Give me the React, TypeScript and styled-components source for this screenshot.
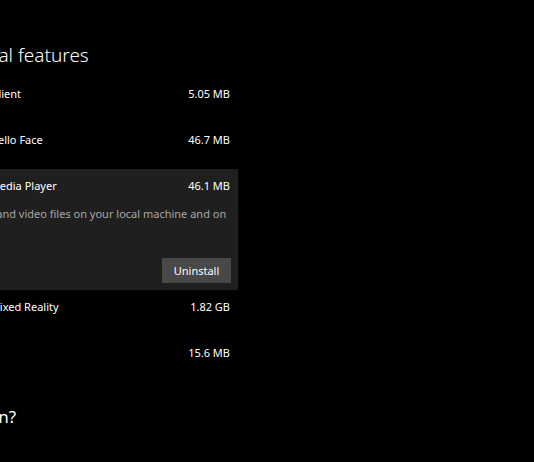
import React from 'react';
import styled, {createGlobalStyle} from "styled-components";

const GlobalStyle = createGlobalStyle`
  html, body {
    margin: 0;
    padding: 0;
    background: #000;
  }
  body {
    font-family: "Noto Sans", "Open Sans", sans-serif;
    color: #fff;
  }
`

type Feature = {
    name: string;
    size: string;
    description?: string;
};

const features: Feature[] = [
    {name: "OpenSSH Client", size: "5.05 MB"},
    {name: "Windows Hello Face", size: "46.7 MB"},
    {
        name: "Windows Media Player",
        size: "46.1 MB",
        description: "Play audio and video files on your local machine and on the Internet.",
    },
    {name: "Windows Mixed Reality", size: "1.82 GB"},
    {name: "WordPad", size: "15.6 MB"},
];

export default function App() {
    return (
        <>
            <GlobalStyle/>
            <Page>
                <Column>
                    <Title>Optional features</Title>
                    <List>
                        {features.map((f) => (
                            <Item key={f.name} expanded={!!f.description}>
                                <NameRow>
                                    <Name>{f.name}</Name>
                                    <Size>{f.size}</Size>
                                </NameRow>
                                {f.description && (
                                    <>
                                        <Description>{f.description}</Description>
                                        <Actions>
                                            <Button>Uninstall</Button>
                                        </Actions>
                                    </>
                                )}
                            </Item>
                        ))}
                    </List>
                    <Subtitle>Have a question?</Subtitle>
                </Column>
            </Page>
        </>
    );
}

const Page = styled.div`
  width: 534px;
  height: 462px;
  overflow: hidden;
  background: #000;
`
const Column = styled.div`
  width: 306px;
  margin-left: -68px;
  padding-top: 41px;
`
const Title = styled.h1`
  margin: 0 0 8px 7px;
  font-size: 19px;
  line-height: 28px;
  font-weight: 300;
  white-space: nowrap;
`
const List = styled.div`
  display: flex;
  flex-direction: column;
`
const Item = styled.div<{ expanded: boolean }>`
  padding: 0 8px ${p => p.expanded ? '7px' : '14px'} 8px;
  background: ${p => p.expanded ? '#1f1f1f' : 'transparent'};
`
const NameRow = styled.div`
  height: 32px;
  display: flex;
  align-items: center;
  justify-content: space-between;
  font-size: 11px;
  white-space: nowrap;
`
const Name = styled.span`
  color: #fff;
`
const Size = styled.span`
  color: #fff;
`
const Description = styled.p`
  margin: 5px 0 0 -8px;
  text-indent: 8px;
  font-size: 11px;
  line-height: 16px;
  color: #a6a6a6;
`
const Actions = styled.div`
  display: flex;
  justify-content: flex-end;
  margin-top: 20px;
`
const Button = styled.button`
  width: 69px;
  height: 25px;
  border: none;
  background: #484848;
  color: #fff;
  font-family: inherit;
  font-size: 11px;
  padding: 0;
  margin-right: -1px;
`
const Subtitle = styled.h2`
  margin: 23px 0 0 -52px;
  font-size: 17px;
  line-height: 24px;
  font-weight: 400;
  white-space: nowrap;
`
